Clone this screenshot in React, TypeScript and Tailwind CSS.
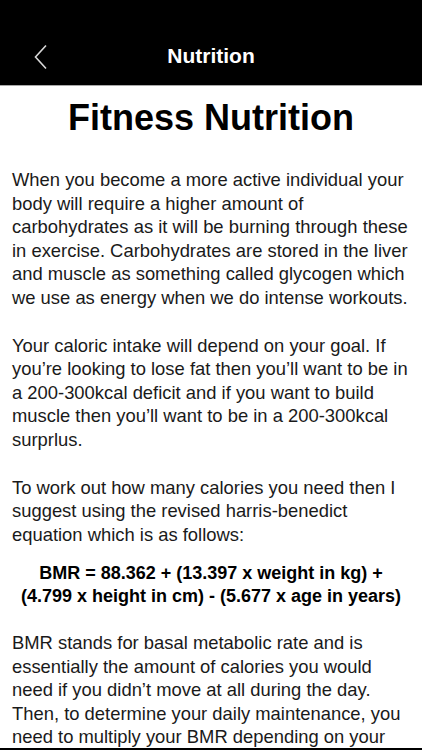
export default function App() {
  return (
    <div
      className="w-[422px] h-[750px] overflow-hidden bg-white flex flex-col relative"
      style={{ fontFamily: '"Liberation Sans", Arial, sans-serif' }}
    >
      {/* Top bar */}
      <div className="h-[86px] bg-black shrink-0 flex items-end pb-[16px] relative border-b border-[#a8a8a8]">
        <button className="absolute left-[33px] top-[44px] w-[16px] h-[26px]">
          <svg width="16" height="26" viewBox="0 0 16 26" fill="none">
            <path d="M13 1.5L2.5 13L13 24.5" stroke="#d8d8d8" strokeWidth="1.6" />
          </svg>
        </button>
        <h1 className="w-full text-center text-white text-[21px] font-bold leading-[26px]">
          Nutrition
        </h1>
      </div>

      <div className="flex-1 px-[12px]">
        <h2 className="text-center text-[36px] font-bold leading-[40px] text-black mt-[12px]">
          Fitness Nutrition
        </h2>

        <div className="mt-[30px] text-[18.4px] leading-[23.5px] text-[#1a1a1a]">
          <p>
            When you become a more active individual your body will require a higher amount of
            carbohydrates as it will be burning through these in exercise. Carbohydrates are
            stored in the liver and muscle as something called glycogen which we use as energy
            when we do intense workouts.
          </p>
          <p className="mt-[24.5px]">
            Your caloric intake will depend on your goal. If you’re looking to lose fat then
            you’ll want to be in a 200-300kcal deficit and if you want to build muscle then
            you’ll want to be in a 200-300kcal surprlus.
          </p>
          <p className="mt-[24.5px]">
            To work out how many calories you need then I suggest using the revised
            harris-benedict equation which is as follows:
          </p>
          <p className="mt-[15.5px] font-bold text-center text-black text-[18px]">
            BMR = 88.362 + (13.397 x weight in kg) + (4.799 x height in cm) - (5.677 x age in
            years)
          </p>
          <p className="mt-[22.5px]">
            BMR stands for basal metabolic rate and is essentially the amount of calories you
            would need if you didn’t move at all during the day. Then, to determine your daily
            maintenance, you need to multiply your BMR depending on your activity level.
          </p>
        </div>
      </div>

      <div className="absolute bottom-0 left-0 right-0 h-[2px] bg-black" />
    </div>
  );
}
